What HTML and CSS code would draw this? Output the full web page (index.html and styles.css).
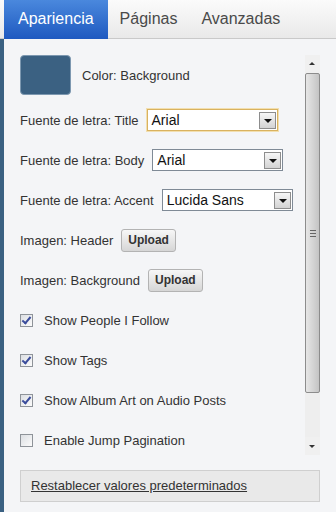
FILE: index.html
```html
<!DOCTYPE html>
<html lang="es">
<head>
  <meta charset="UTF-8" />
  <title>Apariencia</title>
  <link rel="stylesheet" href="styles.css">
</head>
<body>

  <!-- tabs -->
  <div class="tabs">
    <div class="tab active">Apariencia</div>
    <div class="tab">Páginas</div>
    <div class="tab">Avanzadas</div>
  </div>

  <div class="panel">
    <div class="scroller">
      <div class="options">
        <div class="row swatch-row">
          <div class="swatch"></div>
          <span>Color: Background</span>
        </div>

        <div class="row">
          <span>Fuente de letra: Title</span>
          <div class="select focus"><span>Arial</span><i class="arrow"></i></div>
        </div>

        <div class="row">
          <span>Fuente de letra: Body</span>
          <div class="select"><span>Arial</span><i class="arrow"></i></div>
        </div>

        <div class="row">
          <span>Fuente de letra: Accent</span>
          <div class="select"><span>Lucida Sans</span><i class="arrow"></i></div>
        </div>

        <div class="row">
          <span>Imagen: Header</span>
          <button class="upload">Upload</button>
        </div>

        <div class="row">
          <span>Imagen: Background</span>
          <button class="upload">Upload</button>
        </div>

        <div class="row check-row">
          <span class="check on"></span>
          <span>Show People I Follow</span>
        </div>

        <div class="row check-row">
          <span class="check on"></span>
          <span>Show Tags</span>
        </div>

        <div class="row check-row">
          <span class="check on"></span>
          <span>Show Album Art on Audio Posts</span>
        </div>

        <div class="row check-row">
          <span class="check"></span>
          <span>Enable Jump Pagination</span>
        </div>
      </div>

      <div class="scrollbar">
        <div class="sb-btn up"></div>
        <div class="sb-thumb"><i></i><i></i><i></i></div>
        <div class="sb-track"></div>
        <div class="sb-btn down"></div>
      </div>
    </div>

    <div class="reset"><a href="#">Restablecer valores predeterminados</a></div>
  </div>

</body>
</html>
```

FILE: styles.css
```css
body {
  margin: 0;
  width: 336px;
  height: 512px;
  overflow: hidden;
  font-family: 'Liberation Sans', Arial, sans-serif;
  background: #f4f5f7;
  color: #333;
}

.tabs {
  display: flex;
  height: 38px;
  padding-left: 4px;
  background: linear-gradient(#fbfbfb, #e9e9e9);
  border-bottom: 1px solid #c9c9c9;
}

.tab {
  padding: 0 12px;
  line-height: 38px;
  font-size: 16px;
  color: #4a4a4a;
}

.tab.active {
  padding: 0 14px;
  background: linear-gradient(#4a88dd, #1e59c0);
  color: #fff;
  height: 39px;
}

.panel {
  height: 473px;
  border-left: 4px solid #3b6182;
  padding: 16px 16px 0 16px;
  box-sizing: border-box;
}

.scroller {
  display: flex;
  height: 400px;
}

.options {
  flex: 1;
  font-size: 13px;
}

.row {
  display: flex;
  align-items: center;
  height: 40px;
  gap: 8px;
}

.swatch-row {
  gap: 11px;
  margin-bottom: 5px;
}

.swatch {
  width: 49px;
  height: 38px;
  background: #3b6182;
  border: 1px solid #7d98b0;
  border-radius: 4px;
}

.select {
  display: flex;
  align-items: center;
  justify-content: space-between;
  width: 124px;
  height: 18px;
  padding: 1px 1px 1px 4px;
  background: #fff;
  border: 1px solid #7f8a96;
  font-size: 14px;
  color: #111;
}

.select.focus {
  border: 1px solid #d9b25f;
  box-shadow: 0 0 0 1px #f2dfaf;
}

.arrow {
  width: 15px;
  height: 15px;
  border: 1px solid #8d8d8d;
  background: linear-gradient(#f6f6f6, #d3d3d3);
  position: relative;
}

.arrow::after {
  content: "";
  position: absolute;
  left: 4px;
  top: 6px;
  border-left: 4px solid transparent;
  border-right: 4px solid transparent;
  border-top: 4px solid #111;
}

.upload {
  height: 23px;
  padding: 0 6px;
  border: 1px solid #b3b3b3;
  border-radius: 3px;
  background: linear-gradient(#f7f7f7, #d6d6d6);
  font-family: 'Liberation Sans', Arial, sans-serif;
  font-size: 12px;
  font-weight: bold;
  color: #333;
}

.check-row {
  gap: 11px;
}

.check {
  width: 11px;
  height: 11px;
  border: 1px solid #8e9399;
  background: linear-gradient(135deg, #dcdfe3, #fbfbfb);
  position: relative;
}

.check.on::after {
  content: "";
  position: absolute;
  left: 3px;
  top: 0px;
  width: 3px;
  height: 7px;
  border-right: 2px solid #3a4c9c;
  border-bottom: 2px solid #3a4c9c;
  transform: rotate(40deg);
}

.scrollbar {
  display: flex;
  flex-direction: column;
  width: 15px;
  margin-left: 4px;
  background: #eeeeee;
}

.sb-btn {
  height: 18px;
  position: relative;
  background: #f0f0f0;
}

.sb-btn::after {
  content: "";
  position: absolute;
  left: 4px;
  border-left: 3px solid transparent;
  border-right: 3px solid transparent;
}

.sb-btn.up::after {
  top: 7px;
  border-bottom: 3px solid #333;
}

.sb-btn.down::after {
  top: 8px;
  border-top: 3px solid #333;
}

.sb-thumb {
  height: 320px;
  border: 1px solid #8c8c8c;
  border-radius: 2px;
  background: linear-gradient(90deg, #e6e6e6, #d2d2d2 60%, #c4c4c4);
  box-sizing: border-box;
  display: flex;
  flex-direction: column;
  justify-content: center;
  align-items: center;
  gap: 2px;
}

.sb-thumb i {
  width: 6px;
  height: 1px;
  background: #666;
}

.sb-track {
  flex: 1;
}

.reset {
  margin-top: 15px;
  height: 30px;
  border: 1px solid #cfcfcf;
  background: #e9e9e9;
  padding-left: 10px;
  font-size: 13px;
  line-height: 30px;
}

.reset a {
  color: #333;
}
```
